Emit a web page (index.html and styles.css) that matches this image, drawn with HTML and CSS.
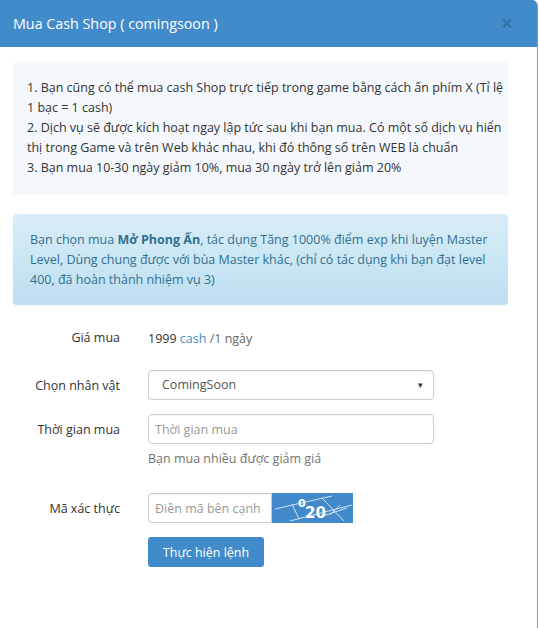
FILE: index.html
```html
<!DOCTYPE html>
<html>
  <head>
    <meta charset="utf-8" />
    <title>Mua Cash Shop</title>
    <link rel="stylesheet" href="styles.css">
  </head>
  <body>
    <div class="modal">
      <div class="modal-header">
        <h4 class="modal-title">Mua Cash Shop ( comingsoon )</h4>
        <span class="close">&times;</span>
      </div>

      <div class="modal-body">
        <div class="note">
          1. Bạn cũng có thể mua cash Shop trực tiếp trong game bằng cách ấn phím X (Tỉ lệ 1 bạc = 1 cash)<br>
          2. Dịch vụ sẽ được kích hoạt ngay lập tức sau khi bạn mua. Có một số dịch vụ hiển thị trong Game và trên Web khác nhau, khi đó thông số trên WEB là chuẩn<br>
          3. Bạn mua 10-30 ngày giảm 10%, mua 30 ngày trở lên giảm 20%
        </div>

        <div class="alert-info">
          Bạn chọn mua <b>Mở Phong Ấn</b>, tác dụng Tăng 1000% điểm exp khi luyện Master Level, Dùng chung được với bùa Master khác, (chỉ có tác dụng khi bạn đạt level 400, đã hoàn thành nhiệm vụ 3)
        </div>

        <form class="form-horizontal">
          <div class="form-group">
            <label class="control-label">Giá mua</label>
            <div class="static">1999 <span class="cash">cash</span> <span class="muted">/1 ngày</span></div>
          </div>

          <div class="form-group">
            <label class="control-label">Chọn nhân vật</label>
            <div class="select">
              <span>ComingSoon</span>
              <span class="caret">&#9662;</span>
            </div>
          </div>

          <div class="form-group">
            <label class="control-label">Thời gian mua</label>
            <div>
              <input class="form-control" type="text" placeholder="Thời gian mua">
              <p class="help-block">Bạn mua nhiều được giảm giá</p>
            </div>
          </div>

          <div class="form-group">
            <label class="control-label">Mã xác thực</label>
            <div class="captcha-row">
              <input class="form-control captcha-input" type="text" placeholder="Điền mã bên cạnh">
              <svg class="captcha" width="81" height="30" viewBox="0 0 81 30">
                <rect width="81" height="30" fill="#4189cb"/>
                <g stroke="#cfe2f5" stroke-width="1" fill="none">
                  <line x1="3" y1="16" x2="60" y2="3"/>
                  <line x1="18" y1="28" x2="80" y2="12"/>
                  <line x1="20" y1="11" x2="27" y2="26"/>
                  <line x1="50" y1="5" x2="72" y2="28"/>
                  <line x1="48" y1="24" x2="75" y2="15"/>
                  <line x1="58" y1="22" x2="68" y2="12"/>
                </g>
                <text x="26" y="14" fill="#fff" font-family="DejaVu Sans, sans-serif" font-weight="bold" font-size="11">0</text>
                <text x="33" y="25" fill="#fff" font-family="DejaVu Sans, sans-serif" font-weight="bold" font-size="15">20</text>
              </svg>
            </div>
          </div>

          <div class="form-group">
            <span></span>
            <div><button class="btn" type="button">Thực hiện lệnh</button></div>
          </div>
        </form>
      </div>
    </div>
  </body>
</html>
```

FILE: styles.css
```css
html, body {
  margin: 0;
  height: 100%;
}
body {
  background-color: #fff;
  color: #333;
  font-family: "Open Sans", "Noto Sans", sans-serif;
  font-size: 12.5px;
  line-height: 20px;
}
.modal {
  box-sizing: border-box;
  width: 538px;
  min-height: 100%;
  border-right: 1px solid #9a9a9a;
  border-top-right-radius: 6px;
}
.modal-header {
  align-items: center;
  background-color: #428bca;
  border-top-right-radius: 5px;
  display: flex;
  height: 47px;
  justify-content: space-between;
  padding: 0 13px;
  box-sizing: border-box;
}
.modal-title {
  color: #fff;
  font-size: 14.3px;
  font-weight: normal;
  margin: 0;
}
.close {
  color: rgba(0, 0, 0, 0.2);
  font-size: 21px;
  font-weight: bold;
  margin-right: 11px;
  margin-top: -2px;
}
.modal-body {
  padding: 15px 29px 20px 13px;
}
.note {
  background-color: #f4f8fc;
  border-radius: 4px;
  padding: 16px 2px 17px 14px;
  margin-bottom: 19px;
}
.alert-info {
  background-image: linear-gradient(to bottom, #d9edf7 0, #bcdff1 100%);
  border-radius: 4px;
  box-shadow: 0 1px 2px rgba(0, 0, 0, 0.05);
  color: #31708f;
  padding: 16px 17px 15px 17px;
  margin-bottom: 17px;
}
.form-group {
  column-gap: 28px;
  display: grid;
  grid-template-columns: 107px 286px;
  margin-bottom: 14px;
}
.control-label {
  padding-top: 6px;
  text-align: right;
}
.static {
  padding: 7px 0;
}
.cash {
  color: #428bca;
}
.muted {
  color: #666;
}
.select, .form-control {
  border: 1px solid #ccc;
  border-radius: 4px;
  box-sizing: border-box;
  box-shadow: inset 0 1px 1px rgba(0, 0, 0, 0.04);
  color: #555;
  height: 30px;
}
.select {
  align-items: center;
  display: flex;
  justify-content: space-between;
  padding: 0 10px 0 13px;
}
.caret {
  font-size: 9px;
  color: #333;
}
.form-control {
  display: block;
  font-family: inherit;
  font-size: 12.5px;
  padding: 0 6px;
  width: 100%;
}
.form-control::placeholder {
  color: #999;
}
.help-block {
  color: #737373;
  margin: 6px 0 11px 0;
  line-height: 18px;
}
.captcha-row {
  display: flex;
}
.captcha-input {
  border-bottom-right-radius: 0;
  border-top-right-radius: 0;
  width: 124px;
}
.captcha {
  display: block;
}
.btn {
  background-color: #428bca;
  border: none;
  border-radius: 3px;
  color: #fff;
  font-family: inherit;
  font-size: 12.5px;
  height: 30px;
  padding: 0;
  white-space: nowrap;
  width: 116px;
}
```
